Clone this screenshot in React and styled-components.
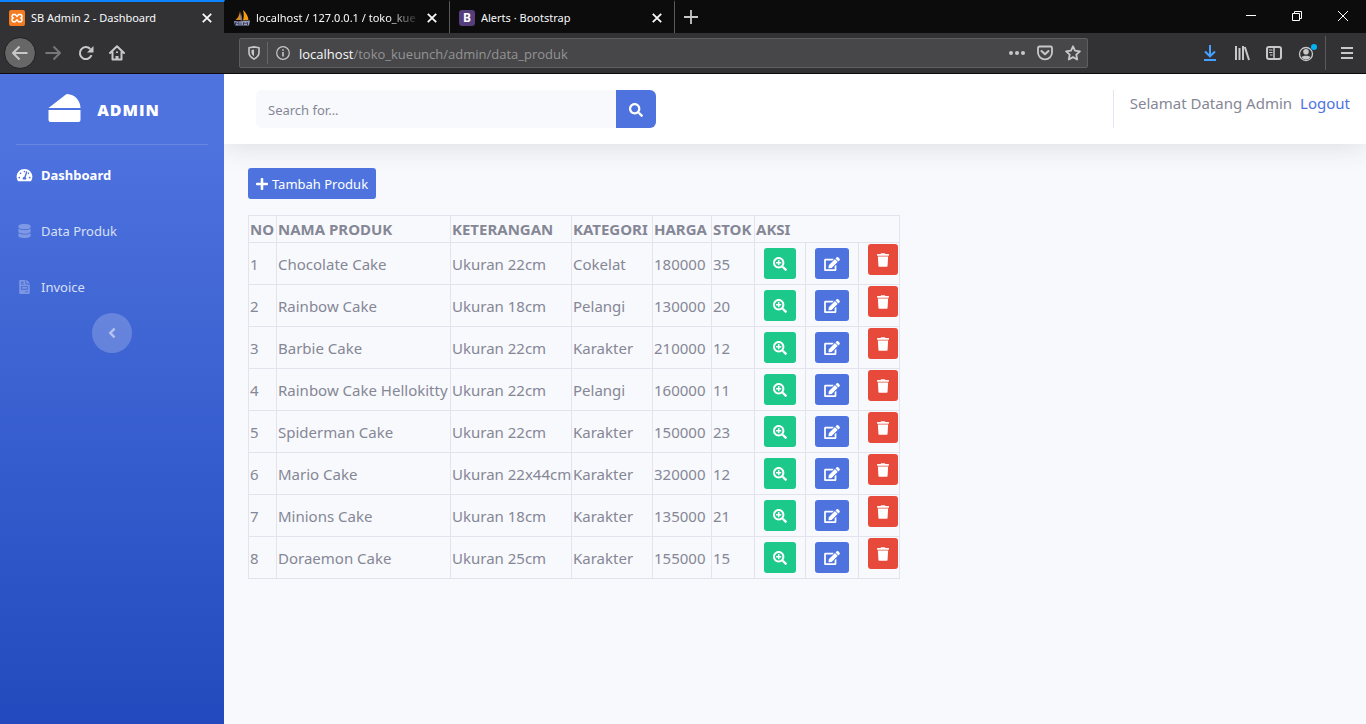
import React from "react";
import styled, { createGlobalStyle } from "styled-components";
import {
  FaTachometerAlt,
  FaDatabase,
  FaFileInvoice,
  FaAngleLeft,
  FaSearch,
  FaPlus,
  FaSearchPlus,
  FaEdit,
  FaTrash,
  FaCheese,
} from "react-icons/fa";

const GlobalStyle = createGlobalStyle`
  *, *::before, *::after { box-sizing: border-box; }
  body {
    margin: 0;
    font-family: "Noto Sans", "Open Sans", sans-serif;
    font-size: 15px;
    line-height: 24px;
    color: #858796;
    background: #f8f9fc;
  }
  button, input { font: inherit; }
`;

const Window = styled.div`
  min-height: 100vh;
  display: flex;
  flex-direction: column;
`;

/* ---------- browser chrome ---------- */

const TabStrip = styled.div`
  display: flex;
  height: 33px;
  background: #0c0c0d;
`;

const Tab = styled.div`
  flex: 0 1 225px;
  min-width: 0;
  display: flex;
  align-items: center;
  gap: 6px;
  padding: 0 11px 0 9px;
  color: #f9f9fa;
  font-size: 11px;
  line-height: 16px;
  background: ${(p) => (p.$active ? "#323234" : "transparent")};
  border-top: 2px solid ${(p) => (p.$active ? "#0a84ff" : "transparent")};
  border-right: 1px solid ${(p) => (p.$line ? "#5a5a5c" : "transparent")};
  background-clip: padding-box;
`;

const TabTitle = styled.span`
  flex: 1;
  min-width: 0;
  overflow: hidden;
  white-space: nowrap;
  ${(p) => p.$fade && "mask-image: linear-gradient(to right, #000 80%, transparent);"}
`;

const ChromeButton = styled.button`
  flex: none;
  display: flex;
  align-items: center;
  justify-content: center;
  width: ${(p) => p.$width || 32}px;
  height: ${(p) => p.$height || 32}px;
  padding: 0;
  border: ${(p) => (p.$ring ? "1px solid #1f1f20" : "0")};
  border-radius: ${(p) => (p.$ring ? "50%" : "2px")};
  background: ${(p) => (p.$ring ? "#676768" : "transparent")};
  color: ${(p) => p.$color || "#c8c8c9"};
`;

const WindowControls = styled.div`
  display: flex;
  margin-left: auto;
`;

const Toolbar = styled.div`
  display: flex;
  align-items: center;
  height: 41px;
  padding: 0 4px;
  background: #323234;
  border-bottom: 1px solid #0c0c0d;
`;

const ToolGroup = styled.div`
  display: flex;
  align-items: center;
`;

const AddressBar = styled.div`
  flex: 1;
  min-width: 0;
  display: flex;
  align-items: center;
  height: 30px;
  margin: 0 106px;
  padding: 0 0 0 6px;
  background: #474749;
  border: 1px solid #5e5e60;
  border-radius: 2px;
  font-family: "Open Sans", "Noto Sans", sans-serif;
  font-size: 13px;
`;

const AddressDivider = styled.span`
  width: 1px;
  height: 22px;
  margin: 0 6px 0 5px;
  background: #66666a;
`;

const Host = styled.label`
  margin-left: 7px;
  padding-top: 2px;
  color: #f9f9fa;
`;

const PathInput = styled.input`
  flex: 1;
  min-width: 0;
  padding: 2px 0 0;
  border: 0;
  outline: 0;
  background: transparent;
  color: #949495;
`;

const MenuDivider = styled.span`
  width: 1px;
  height: 34px;
  margin: 0 6px 0 1px;
  background: #5a5a5c;
`;

/* ---------- page ---------- */

const Page = styled.div`
  flex: 1;
  display: flex;
`;

const Sidebar = styled.aside`
  flex: none;
  width: 224px;
  display: flex;
  flex-direction: column;
  align-items: stretch;
  background: linear-gradient(180deg, #4e73df 10%, #224abe 100%);
`;

const Brand = styled.a`
  display: flex;
  align-items: center;
  justify-content: center;
  gap: 16px;
  height: 70px;
  padding: 0 16px 2px 0;
  color: #fff;
  font-family: "Open Sans", "Noto Sans", sans-serif;
  font-size: 16px;
  font-weight: 800;
  text-decoration: none;
  letter-spacing: 1px;
  svg { width: 33px; height: 32px; }
  span { padding-top: 4px; }
`;

const Divider = styled.hr`
  width: auto;
  height: 1px;
  margin: 0 16px;
  border: 0;
  background: rgba(255, 255, 255, 0.15);
`;

const NavItem = styled.a`
  display: flex;
  align-items: center;
  gap: 8px;
  height: 56px;
  padding: 4px 16px 0;
  font-size: 13px;
  font-weight: ${(p) => (p.$active ? 700 : 400)};
  color: ${(p) => (p.$active ? "#fff" : "rgba(255,255,255,0.8)")};
  text-decoration: none;
  svg {
    width: 17px;
    height: 14px;
    color: ${(p) => (p.$active ? "#fff" : "rgba(255,255,255,0.3)")};
  }
`;

const CollapseButton = styled.button`
  align-self: center;
  display: flex;
  align-items: center;
  justify-content: center;
  width: 40px;
  height: 40px;
  padding: 0;
  border: 0;
  border-radius: 50%;
  background: rgba(255, 255, 255, 0.2);
  color: rgba(255, 255, 255, 0.5);
`;

const Content = styled.div`
  flex: 1;
  min-width: 0;
  overflow: hidden;
`;

const Topbar = styled.header`
  display: flex;
  justify-content: space-between;
  padding: 16px 16px 16px 32px;
  background: #fff;
  box-shadow: 0 2px 28px 0 rgba(58, 59, 69, 0.15);
`;

const SearchForm = styled.form`
  display: flex;
  width: 400px;
  height: 38px;
`;

const SearchInput = styled.input`
  flex: 1;
  min-width: 0;
  padding: 2px 12px 0;
  border: 0;
  border-radius: 6px 0 0 6px;
  background: #f8f9fc;
  font-size: 13px;
  color: #6e707e;
  &::placeholder { color: #858796; opacity: 1; }
`;

const SearchButton = styled.button`
  width: 40px;
  padding: 4px 0 0;
  border: 0;
  border-radius: 0 6px 6px 0;
  background: #4e73df;
  color: #fff;
  font-size: 14px;
  line-height: 14px;
`;

const UserBox = styled.div`
  display: flex;
  gap: 8px;
  padding: 1px 0 0 16px;
  border-left: 1px solid #e3e6f0;
  white-space: nowrap;
`;

const LogoutLink = styled.a`
  color: #4e73df;
  text-decoration: none;
`;

const Main = styled.main`
  padding: 24px;
`;

const ActionButton = styled.button`
  display: flex;
  align-items: center;
  justify-content: center;
  gap: 4px;
  width: ${(p) => p.$width}px;
  height: 31px;
  padding: 0;
  border: 0;
  border-radius: 3px;
  background: ${(p) => p.$color};
  color: #fff;
  font-size: 13px;
  white-space: nowrap;
`;

const Table = styled.table`
  width: 651px;
  margin-top: 16px;
  table-layout: fixed;
  border-collapse: collapse;
`;

const cell = `
  padding: 1px;
  border: 1px solid #e3e3ee;
  white-space: nowrap;
  text-align: left;
`;

const HeadCell = styled.th`
  ${cell}
  height: 27px;
  font-weight: 700;
`;

const Cell = styled.td`
  ${cell}
  height: 42px;
`;

const ActionCell = styled.td`
  ${cell}
  padding-left: 9px;
  vertical-align: ${(p) => (p.$top ? "top" : "middle")};
`;

/* ---------- drawings ---------- */

const Svg = ({ size = 16, w, children, ...rest }) => (
  <svg
    width={w || size}
    height={size}
    viewBox={`0 0 ${w || size} ${size}`}
    fill="none"
    stroke="currentColor"
    strokeWidth="2"
    aria-hidden="true"
    {...rest}
  >
    {children}
  </svg>
);

const XamppIcon = () => (
  <Svg stroke="none">
    <rect width="16" height="16" rx="2" fill="#f47b20" />
    <path
      d="M4 4.5h2.3L8 6.4l1.700-1.900H12L13 6v1L11.800 8 13 9v1.500l-1 1.200H9.700L8 9.800l-1.700 1.900H4l-1-1.200V9l1.200-1L3 7V6z"
      stroke="#fff"
      strokeWidth="1.500"
      fill="none"
    />
  </Svg>
);

const SailIcon = () => (
  <Svg stroke="none">
    <path d="M6 1 7.500 10H1.500C4 8 5.500 5 6 1z" fill="#d98a1c" />
    <path d="M9 0c3 2.500 5 6 5.500 10L9 10.500C10 7 10 4 9 0z" fill="#f89c0e" />
    <path d="M7 3l1.500 7.500H6.500z" fill="#6c78af" />
    <path d="M0 11l4 .5 12-1-1 5H1z" fill="#9a9fbe" />
    <path d="M1.500 15v-2.500l2 1 1.500-1V15M7 12.500v2.500M9.500 15v-2.500l2 1 2-1V15" stroke="#333a5c" strokeWidth="1" />
  </Svg>
);

const BadgeB = styled.span`
  display: flex;
  align-items: center;
  justify-content: center;
  width: 16px;
  height: 16px;
  border-radius: 3px;
  background: #563d7c;
  color: #fff;
  font-size: 12px;
  font-weight: 700;
`;

const CloseIcon = () => (
  <Svg size={10} strokeWidth="1.800"><path d="M.8.8l8.400 8.400M9.200.8.8 9.200" /></Svg>
);

const BackIcon = () => (
  <Svg><path d="M15.500 8H1.500M7.500 1.500 1 8l6.500 6.500" strokeLinejoin="round" /></Svg>
);
const ForwardIcon = () => (
  <Svg><path d="M.5 8h14M8.500 1.500 15 8l-6.500 6.500" strokeLinejoin="round" /></Svg>
);
const ReloadIcon = () => (
  <Svg>
    <path d="M13.500 10.200A6 6 0 1 1 12.300 4" />
    <path d="M15.500 1v6.500H9z" fill="currentColor" stroke="none" />
  </Svg>
);
const HomeIcon = () => (
  <Svg>
    <path d="M1 8l7-6.800L15 8M3.500 7v7.500h9V7" strokeLinejoin="round" strokeLinecap="round" />
    <path d="M8 15v-4" strokeWidth="3" />
    <path d="M8 6.500v1.500" />
  </Svg>
);
const ShieldIcon = () => (
  <Svg size={14} w={12} strokeWidth="1.600">
    <path d="M1 1.800 6 .9l5 .9v4.700c0 3-2 5-5 6.600C3 11.500 1 9.500 1 6.500z" strokeLinejoin="round" />
    <path d="M6 3.500v6.700C4.300 9 3.500 8 3.500 6.500V4z" fill="currentColor" stroke="none" />
  </Svg>
);
const InfoIcon = () => (
  <Svg size={14} strokeWidth="1.200">
    <circle cx="7" cy="7" r="6.300" />
    <path d="M7 6v4.500M7 3.200v1.600" strokeWidth="1.600" />
  </Svg>
);
const DotsIcon = () => (
  <Svg fill="currentColor" stroke="none">
    <circle cx="2" cy="8" r="2" /><circle cx="8" cy="8" r="2" /><circle cx="14" cy="8" r="2" />
  </Svg>
);
const PocketIcon = () => (
  <Svg>
    <path d="M2.500 1.500h11a1.500 1.500 0 0 1 1.500 1.500v4.500a7 6.800 0 0 1-14 0V3a1.500 1.500 0 0 1 1.500-1.500z" strokeWidth="1.800" />
    <path d="M4.500 6 8 9.300 11.500 6" strokeLinecap="round" strokeLinejoin="round" />
  </Svg>
);
const StarIcon = () => (
  <Svg strokeWidth="1.800">
    <path d="M8 1.300l2 4.400 4.900.6-3.600 3.300.9 4.900L8 12.100l-4.200 2.400.9-4.900L1.100 6.300 6 5.700z" strokeLinejoin="round" />
  </Svg>
);
const DownloadIcon = () => (
  <Svg><path d="M8 0v11M3 6.500 8 11.300l5-4.800M2 15h12" /></Svg>
);
const LibraryIcon = () => (
  <Svg><path d="M2 1v14M5.500 3v12M9 1v14M10.800 2l4.200 13" /></Svg>
);
const ReaderIcon = () => (
  <Svg>
    <rect x="1" y="2" width="14" height="12" rx="2" />
    <path d="M8 2v12" strokeWidth="1.500" />
    <path d="M3 5h3.500M3 7.500h3.500M4 10h2.500" strokeWidth="1" />
  </Svg>
);
const AccountIcon = () => (
  <Svg size={20} w={20}>
    <circle cx="9" cy="11" r="6.500" strokeWidth="1.300" />
    <circle cx="9" cy="8.800" r="2.800" fill="currentColor" stroke="none" />
    <path d="M4.500 14.300c1.200-2 7.800-2 9 0A5.500 5.500 0 0 1 9 16.500a5.500 5.500 0 0 1-4.500-2.200z" fill="currentColor" stroke="none" />
    <circle cx="17" cy="4" r="3" fill="#00b3f4" stroke="none" />
  </Svg>
);
const MenuIcon = () => (
  <Svg w={12} size={14}><path d="M0 2h12M0 7h12M0 12h12" /></Svg>
);
const PlusIcon = () => (
  <Svg size={14} strokeWidth="1.800"><path d="M7 0v14M0 7h14" /></Svg>
);
const MinimizeIcon = () => (
  <Svg size={10} strokeWidth="1"><path d="M0 4.500h10" /></Svg>
);
const RestoreIcon = () => (
  <Svg size={10} strokeWidth="1"><path d="M.5 2.500h7v7h-7zM2.500 2.500v-2h7v7h-2" /></Svg>
);
const QuitIcon = () => (
  <Svg size={10} strokeWidth="1"><path d="M0 0l10 10M10 0 0 10" /></Svg>
);

const sized = (Icon, width) => styled(Icon)`
  flex: none;
  width: ${width}px;
  height: 14px;
`;
const ZoomGlyph = sized(FaSearchPlus, 14);
const EditGlyph = sized(FaEdit, 16);
const TrashGlyph = sized(FaTrash, 12);
const PlusGlyph = sized(FaPlus, 12);

/* ---------- data ---------- */

const COLUMN_WIDTHS = [28, 174, 121, 81, 59, 43, 51, 53, 41];
const HEADINGS = ["NO", "NAMA PRODUK", "KETERANGAN", "KATEGORI", "HARGA", "STOK"];
const PRODUCTS = [
  ["Chocolate Cake", "Ukuran 22cm", "Cokelat", 180000, 35],
  ["Rainbow Cake", "Ukuran 18cm", "Pelangi", 130000, 20],
  ["Barbie Cake", "Ukuran 22cm", "Karakter", 210000, 12],
  ["Rainbow Cake Hellokitty", "Ukuran 22cm", "Pelangi", 160000, 11],
  ["Spiderman Cake", "Ukuran 22cm", "Karakter", 150000, 23],
  ["Mario Cake", "Ukuran 22x44cm", "Karakter", 320000, 12],
  ["Minions Cake", "Ukuran 18cm", "Karakter", 135000, 21],
  ["Doraemon Cake", "Ukuran 25cm", "Karakter", 155000, 15],
];

const BrowserTab = ({ icon, title, ...rest }) => (
  <Tab {...rest}>
    {icon}
    <TabTitle $fade={rest.$fade}>{title}</TabTitle>
    <ChromeButton $width={12} $height={16} $color="#f9f9fa" aria-label="Close tab">
      <CloseIcon />
    </ChromeButton>
  </Tab>
);

const ProductRow = ({ number, product }) => (
  <tr>
    <Cell>{number}</Cell>
    {product.map((value, i) => (
      <Cell key={i}>{value}</Cell>
    ))}
    <ActionCell>
      <ActionButton $width={32} $color="#1cc88a" aria-label="Detail"><ZoomGlyph /></ActionButton>
    </ActionCell>
    <ActionCell>
      <ActionButton $width={34} $color="#4e73df" aria-label="Edit"><EditGlyph /></ActionButton>
    </ActionCell>
    <ActionCell $top>
      <ActionButton $width={30} $color="#e74a3b" aria-label="Hapus"><TrashGlyph /></ActionButton>
    </ActionCell>
  </tr>
);

export default function App() {
  return (
    <Window>
      <GlobalStyle />
      <TabStrip>
        <BrowserTab $active icon={<XamppIcon />} title="SB Admin 2 - Dashboard" />
        <BrowserTab $line $fade icon={<SailIcon />} title="localhost / 127.0.0.1 / toko_kue" />
        <BrowserTab $line icon={<BadgeB>B</BadgeB>} title="Alerts · Bootstrap" />
        <ChromeButton $width={32} $height={33} aria-label="New tab"><PlusIcon /></ChromeButton>
        <WindowControls>
          <ChromeButton $width={46} $color="#fff" aria-label="Minimize"><MinimizeIcon /></ChromeButton>
          <ChromeButton $width={46} $color="#fff" aria-label="Restore"><RestoreIcon /></ChromeButton>
          <ChromeButton $width={46} $color="#fff" aria-label="Close"><QuitIcon /></ChromeButton>
        </WindowControls>
      </TabStrip>
      <Toolbar>
        <ToolGroup>
          <ChromeButton $ring aria-label="Back"><BackIcon /></ChromeButton>
          <ChromeButton $width={34} $color="#777778" aria-label="Forward"><ForwardIcon /></ChromeButton>
          <ChromeButton $width={31} aria-label="Reload"><ReloadIcon /></ChromeButton>
          <ChromeButton aria-label="Home"><HomeIcon /></ChromeButton>
        </ToolGroup>
        <AddressBar>
          <ChromeButton $width={16} $height={28} aria-label="Protection"><ShieldIcon /></ChromeButton>
          <AddressDivider />
          <ChromeButton $width={18} $height={28} aria-label="Site information"><InfoIcon /></ChromeButton>
          <Host htmlFor="address">localhost</Host>
          <PathInput id="address" defaultValue="/toko_kueunch/admin/data_produk" />
          <ChromeButton $width={28} $height={28} aria-label="Page actions"><DotsIcon /></ChromeButton>
          <ChromeButton $width={28} $height={28} aria-label="Pocket"><PocketIcon /></ChromeButton>
          <ChromeButton $width={28} $height={28} aria-label="Bookmark"><StarIcon /></ChromeButton>
        </AddressBar>
        <ToolGroup>
          <ChromeButton $color="#45a1ff" aria-label="Downloads"><DownloadIcon /></ChromeButton>
          <ChromeButton aria-label="Library"><LibraryIcon /></ChromeButton>
          <ChromeButton aria-label="Sidebars"><ReaderIcon /></ChromeButton>
          <ChromeButton $width={34} aria-label="Account"><AccountIcon /></ChromeButton>
          <MenuDivider />
          <ChromeButton $width={30} aria-label="Menu"><MenuIcon /></ChromeButton>
        </ToolGroup>
      </Toolbar>

      <Page>
        <Sidebar>
          <Brand href="#"><FaCheese /><span>ADMIN</span></Brand>
          <Divider />
          <NavItem $active href="#"><FaTachometerAlt />Dashboard</NavItem>
          <NavItem href="#"><FaDatabase />Data Produk</NavItem>
          <NavItem href="#"><FaFileInvoice />Invoice</NavItem>
          <CollapseButton aria-label="Toggle sidebar"><FaAngleLeft size={16} /></CollapseButton>
        </Sidebar>
        <Content>
          <Topbar>
            <SearchForm>
              <SearchInput type="text" placeholder="Search for..." aria-label="Search" />
              <SearchButton type="button" aria-label="Search"><FaSearch /></SearchButton>
            </SearchForm>
            <UserBox>
              <span>Selamat Datang Admin</span>
              <LogoutLink href="#">Logout</LogoutLink>
            </UserBox>
          </Topbar>
          <Main>
            <ActionButton $width={128} $color="#4e73df"><PlusGlyph />Tambah Produk</ActionButton>
            <Table>
              <colgroup>
                {COLUMN_WIDTHS.map((width, i) => (
                  <col key={i} style={{ width }} />
                ))}
              </colgroup>
              <thead>
                <tr>
                  {HEADINGS.map((text) => (
                    <HeadCell key={text}>{text}</HeadCell>
                  ))}
                  <HeadCell colSpan={3}>AKSI</HeadCell>
                </tr>
              </thead>
              <tbody>
                {PRODUCTS.map((product, i) => (
                  <ProductRow key={product[0]} number={i + 1} product={product} />
                ))}
              </tbody>
            </Table>
          </Main>
        </Content>
      </Page>
    </Window>
  );
}
